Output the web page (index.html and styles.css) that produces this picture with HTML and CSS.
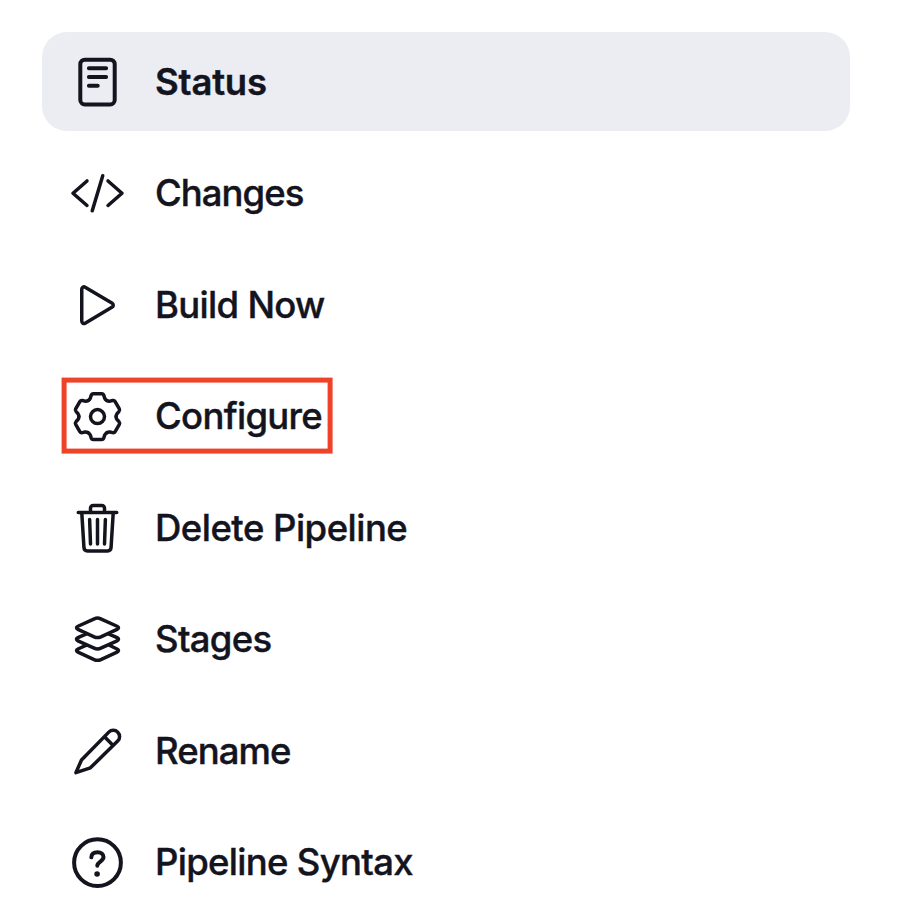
FILE: index.html
```
<!DOCTYPE html>
<html lang="en">
<head>
<meta charset="utf-8">
<title>Pipeline</title>
<link rel="stylesheet" href="styles.css">
</head>
<body>
<nav class="tasks">
  <a class="task task--active">
    <svg class="icon icon--bold" viewBox="0 0 56 56"><rect x="10.8" y="5.5" width="34.4" height="44.7" rx="4.5"/><path d="M19.4 14h17.2M19.4 22.8h17.2M19.4 31.5h8.8"/></svg>
    <span class="label label--status">Status</span>
  </a>
  <a class="task">
    <svg class="icon" viewBox="0 0 512 512"><path d="M160 368L32 256l128-112M352 368l128-112-128-112M304 96l-96 320"/></svg>
    <span class="label label--tight">Changes</span>
  </a>
  <a class="task">
    <svg class="icon" viewBox="0 0 512 512"><path d="M112 111v290c0 17.44 17 28.52 31 20.16l247.9-148.37c12.12-7.25 12.12-26.33 0-33.58L143 90.84c-14-8.36-31 2.72-31 20.16z"/></svg>
    <span class="label">Build Now</span>
  </a>
  <a class="task">
    <svg class="icon icon--fine" viewBox="0 0 56 56">
      <defs><path id="tooth" d="M-9.3-16.1Q-7.8-17-7.1-18.6L-6.4-21Q-5.8-22.8-4.2-22.8H4.2Q5.8-22.8 6.4-21L7.1-18.6Q7.8-17 9.3-16.1"/></defs>
      <g transform="translate(28 28.4)">
        <circle r="7"/>
        <use href="#tooth"/><use href="#tooth" transform="rotate(60)"/><use href="#tooth" transform="rotate(120)"/><use href="#tooth" transform="rotate(180)"/><use href="#tooth" transform="rotate(240)"/><use href="#tooth" transform="rotate(300)"/>
      </g>
    </svg>
    <span class="label">Configure</span>
    <span class="highlight"></span>
  </a>
  <a class="task">
    <svg class="icon" viewBox="0 0 512 512"><path d="M112 112l20 320c.95 18.49 14.4 32 32 32h184c17.67 0 30.87-13.51 32-32l20-320M80 112h352M192 112V72a23.93 23.93 0 0124-24h80a23.93 23.93 0 0124 24v40M256 176v224M184 176l8 224M328 176l-8 224"/></svg>
    <span class="label label--wide">Delete Pipeline</span>
  </a>
  <a class="task">
    <svg class="icon" viewBox="0 0 512 512"><path d="M434.8 137.65l-149.36-68.1c-16.19-7.4-42.69-7.4-58.88 0L77.3 137.65c-17.6 8-17.6 21.09 0 29.09l148 67.5c16.89 7.7 44.69 7.7 61.58 0l148-67.5c17.52-8 17.52-21.1-.08-29.09zM160 308.52l-82.7 37.11c-17.6 8-17.6 21.1 0 29.1l148 67.5c16.89 7.69 44.69 7.69 61.58 0l148-67.5c17.6-8 17.6-21.1 0-29.1l-79.94-38.47M160 204.48l-82.8 37.16c-17.6 8-17.6 21.1 0 29.1l148 67.49c16.89 7.7 44.69 7.7 61.58 0l148-67.49c17.7-8 17.7-21.1.1-29.1L352 204.48"/></svg>
    <span class="label">Stages</span>
  </a>
  <a class="task">
    <svg class="icon icon--fine" viewBox="0 0 56 56"><path d="M6.4 49.4L12 36.8L39.3 8.9A6.3 6.3 0 0 1 48.2 17.9L20.9 44.6zM35 13.6L43.4 22"/></svg>
    <span class="label label--tight">Rename</span>
  </a>
  <a class="task">
    <svg class="icon icon--bold" viewBox="0 0 56 56"><circle cx="28" cy="28.4" r="23.4"/><path d="M21.8 23.1C22 19.8 24.4 18 28 18C31.6 18 34 20 34 22.9C34 27.4 27.8 27.3 27.8 31.6"/><circle class="dot" cx="27.6" cy="39.8" r="2.8"/></svg>
    <span class="label">Pipeline Syntax</span>
  </a>
</nav>
</body>
</html>
```
FILE: styles.css
```
body {
  margin: 0;
  background: #fff;
  color: #14141f;
  font-family: Inter, "Liberation Sans", sans-serif;
}

.tasks {
  display: flex;
  flex-direction: column;
  gap: 12.5px;
  width: 808px;
  padding: 32px 0 0 42px;
}

.task {
  position: relative;
  display: flex;
  align-items: center;
  gap: 30px;
  box-sizing: border-box;
  height: 99px;
  padding-left: 27px;
  border-radius: 25px;
}

.task--active {
  background: #ecedf3;
}

.icon {
  flex: none;
  width: 56px;
  height: 56px;
  fill: none;
  stroke: currentColor;
  stroke-width: 32;
  stroke-linecap: round;
  stroke-linejoin: round;
  transform: translate(0.5px, 0.2px);
}

.icon--fine {
  stroke-width: 3.5;
}

.icon--bold {
  stroke-width: 4;
}

.dot {
  fill: currentColor;
  stroke: none;
}

.label {
  font-size: 36.5px;
  font-weight: 500;
  line-height: 44px;
  letter-spacing: -0.7px;
  white-space: nowrap;
  -webkit-text-stroke: 0.4px currentColor;
}

.label--tight {
  letter-spacing: -0.95px;
}

.label--wide {
  letter-spacing: -0.52px;
}

.label--status {
  font-weight: 600;
  letter-spacing: -0.2px;
}

.highlight {
  position: absolute;
  top: 11px;
  left: 19.5px;
  box-sizing: border-box;
  width: 271px;
  height: 76px;
  border: 5px solid #ee4328;
  transform: translate(-0.4px, -0.4px);
}
```
